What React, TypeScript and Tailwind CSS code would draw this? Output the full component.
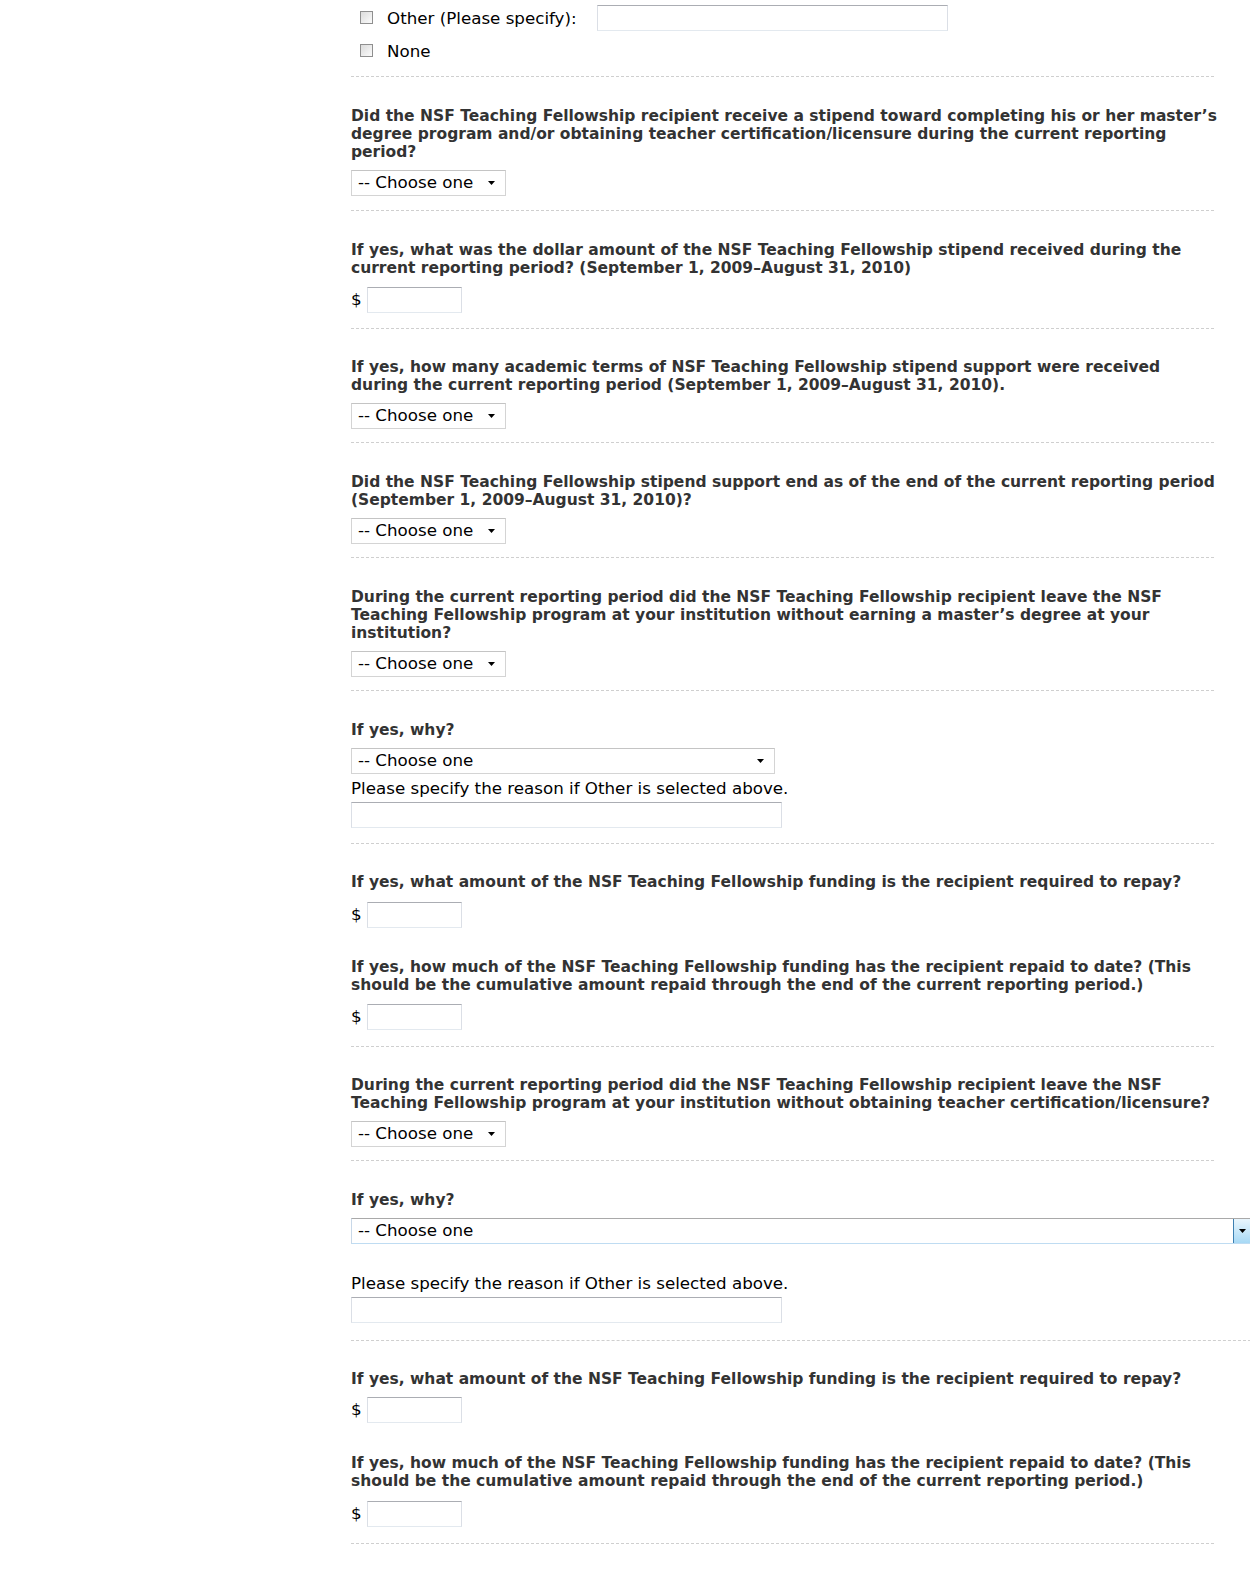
import React from "react";

const Dashed = ({ wide }: { wide?: boolean }) => (
  <div className={`${wide ? "w-[900px]" : "w-[863px]"} border-t border-dashed border-[#cfcfcf]`} />
);

const Q = ({ children, className = "" }: { children: React.ReactNode; className?: string }) => (
  <div className={`font-bold text-[15.5px] leading-[18px] text-[#333333] whitespace-nowrap ${className}`}>{children}</div>
);

const Arrow = () => (
  <svg width="7" height="4" viewBox="0 0 7 4" className="block">
    <path d="M0 0 L7 0 L3.5 4 Z" fill="#000" />
  </svg>
);

const Select = ({ w = "w-[155px]", className = "" }: { w?: string; className?: string }) => (
  <div
    className={`${w} h-[26px] flex items-center justify-between bg-white border border-[#d4d4d4] border-t-[#c4c4c4] pl-[6px] pr-[10px] text-[16.7px] text-black ${className}`}
  >
    <span>-- Choose one</span>
    <Arrow />
  </div>
);

const WideSelect = ({ className = "" }: { className?: string }) => (
  <div
    className={`w-[900px] h-[26px] flex items-stretch bg-white border border-[#c8d8e8] border-t-[#a9a9a9] border-b-[#bfdcf2] text-[16.7px] text-black ${className}`}
  >
    <span className="flex-1 flex items-center pl-[6px]">-- Choose one</span>
    <div className="w-[17px] flex items-center justify-center border-l border-[#3c7fb1] bg-gradient-to-b from-[#eaf6fd] to-[#a7d9f5]">
      <Arrow />
    </div>
  </div>
);

const TextInput = ({ w, className = "" }: { w: string; className?: string }) => (
  <div className={`${w} h-[26px] bg-white border border-[#dbdfe6] border-t-[#abadb3] border-b-[#e3e9ef] ${className}`} />
);

const Dollar = ({ className = "" }: { className?: string }) => (
  <div className={`flex items-center ${className}`}>
    <span className="w-[16px] text-[16.7px] text-black">$</span>
    <TextInput w="w-[95px]" />
  </div>
);

const Checkbox = () => (
  <div className="w-[13px] h-[13px] border border-[#8f8f8f] bg-gradient-to-br from-[#dcdcdc] to-[#fbfbfb] p-[2px]">
    <div className="w-full h-full bg-gradient-to-br from-[#e0e0e0] to-[#f6f6f6]" />
  </div>
);

export default function App() {
  return (
    <div className="w-[1250px] h-[1578px] overflow-hidden bg-white font-['DejaVu_Sans',Verdana,sans-serif]">
      <div className="ml-[351px] flex flex-col items-start">
        {/* checkboxes */}
        <div className="flex items-center h-[26px] mt-[6px]">
          <div className="ml-[9px] -mt-[3px]"><Checkbox /></div>
          <span className="ml-[14px] text-[16.7px] text-black">Other (Please specify):</span>
          <TextInput w="w-[351px]" className="ml-[20px] -mt-[2px]" />
        </div>
        <div className="flex items-center h-[26px] mt-[7px]">
          <div className="ml-[9px] -mt-[3px]"><Checkbox /></div>
          <span className="ml-[14px] text-[16.7px] text-black">None</span>
        </div>
        <div className="mt-[11px]"><Dashed /></div>

        <Q className="mt-[30px]">
          Did the NSF Teaching Fellowship recipient receive a stipend toward completing his or her master’s<br />
          degree program and/or obtaining teacher certification/licensure during the current reporting<br />
          period?
        </Q>
        <Select className="mt-[9px]" />
        <div className="mt-[14px]"><Dashed /></div>

        <Q className="mt-[30px]">
          If yes, what was the dollar amount of the NSF Teaching Fellowship stipend received during the<br />
          current reporting period? (September 1, 2009–August 31, 2010)
        </Q>
        <Dollar className="mt-[10px]" />
        <div className="mt-[15px]"><Dashed /></div>

        <Q className="mt-[29px]">
          If yes, how many academic terms of NSF Teaching Fellowship stipend support were received<br />
          during the current reporting period (September 1, 2009–August 31, 2010).
        </Q>
        <Select className="mt-[9px]" />
        <div className="mt-[13px]"><Dashed /></div>

        <Q className="mt-[30px]">
          Did the NSF Teaching Fellowship stipend support end as of the end of the current reporting period<br />
          (September 1, 2009–August 31, 2010)?
        </Q>
        <Select className="mt-[9px]" />
        <div className="mt-[13px]"><Dashed /></div>

        <Q className="mt-[30px]">
          During the current reporting period did the NSF Teaching Fellowship recipient leave the NSF<br />
          Teaching Fellowship program at your institution without earning a master’s degree at your<br />
          institution?
        </Q>
        <Select className="mt-[9px]" />
        <div className="mt-[13px]"><Dashed /></div>

        <Q className="mt-[30px]">If yes, why?</Q>
        <Select w="w-[424px]" className="mt-[9px]" />
        <div className="mt-[5px] text-[16.7px] leading-[18px] text-black">Please specify the reason if Other is selected above.</div>
        <TextInput w="w-[431px]" className="mt-[5px]" />
        <div className="mt-[15px]"><Dashed /></div>

        <Q className="mt-[29px]">
          If yes, what amount of the NSF Teaching Fellowship funding is the recipient required to repay?
        </Q>
        <Dollar className="mt-[11px]" />

        <Q className="mt-[30px]">
          If yes, how much of the NSF Teaching Fellowship funding has the recipient repaid to date? (This<br />
          should be the cumulative amount repaid through the end of the current reporting period.)
        </Q>
        <Dollar className="mt-[10px]" />
        <div className="mt-[16px]"><Dashed /></div>

        <Q className="mt-[29px]">
          During the current reporting period did the NSF Teaching Fellowship recipient leave the NSF<br />
          Teaching Fellowship program at your institution without obtaining teacher certification/licensure?
        </Q>
        <Select className="mt-[9px]" />
        <div className="mt-[13px]"><Dashed /></div>

        <Q className="mt-[30px]">If yes, why?</Q>
        <WideSelect className="mt-[9px]" />
        <div className="mt-[30px] text-[16.7px] leading-[18px] text-black">Please specify the reason if Other is selected above.</div>
        <TextInput w="w-[431px]" className="mt-[5px]" />
        <div className="mt-[17px]"><Dashed wide /></div>

        <Q className="mt-[29px]">
          If yes, what amount of the NSF Teaching Fellowship funding is the recipient required to repay?
        </Q>
        <Dollar className="mt-[9px]" />

        <Q className="mt-[31px]">
          If yes, how much of the NSF Teaching Fellowship funding has the recipient repaid to date? (This<br />
          should be the cumulative amount repaid through the end of the current reporting period.)
        </Q>
        <Dollar className="mt-[11px]" />
        <div className="mt-[16px]"><Dashed /></div>
      </div>
    </div>
  );
}
